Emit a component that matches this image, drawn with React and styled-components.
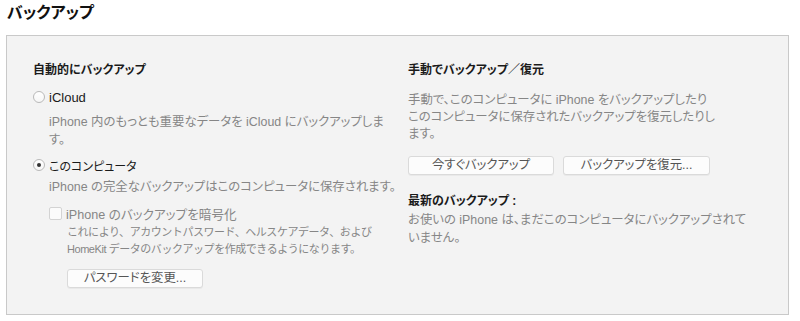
import React from 'react';
import styled, { createGlobalStyle } from 'styled-components';

const GlobalStyle = createGlobalStyle`
    body {
        margin: 0;
        background: #ffffff;
        font-family: "Liberation Sans", "Noto Sans CJK JP", sans-serif;
        font-feature-settings: "palt";
        color: #1d1d1d;
    }
`;

const Page = styled.div`
    width: 800px;
    height: 321px;
    overflow: hidden;
`;

const PageTitle = styled.h1`
    margin: 0;
    padding: 2px 0 0 7px;
    height: 22px;
    line-height: 22px;
    font-size: 16px;
    font-weight: bold;
    color: #111;
`;

const Panel = styled.div`
    margin: 11px 0 0 6px;
    width: 781px;
    height: 278px;
    background: #f3f3f3;
    border: 1px solid #c9c9c9;
    display: grid;
    grid-template-columns: 401px 1fr;
`;

const Column = styled.div`
    display: flex;
    flex-direction: column;
    align-items: flex-start;
    padding-top: 26px;
    padding-left: ${(props) => props.inset || 0}px;
`;

const Heading = styled.div`
    font-size: 12px;
    font-weight: bold;
    line-height: 16px;
    color: #1a1a1a;
    white-space: nowrap;
    margin-top: ${(props) => props.gap || 0}px;
`;

const RadioRow = styled.label`
    display: flex;
    align-items: center;
    gap: 4px;
    height: 18px;
    margin-top: ${(props) => props.gap || 0}px;
    font-size: ${(props) => props.size || 13}px;
    color: #1a1a1a;
    white-space: nowrap;
`;

const RadioCircle = styled.span`
    width: 12px;
    height: 12px;
    box-sizing: border-box;
    border-radius: 50%;
    border: 1px solid #b9b9b9;
    background: linear-gradient(#ffffff, #f6f6f6);
    display: flex;
    align-items: center;
    justify-content: center;

    &::after {
        content: '';
        display: ${(props) => (props.checked ? 'block' : 'none')};
        width: 4px;
        height: 4px;
        border-radius: 50%;
        background: #333;
    }
`;

const Desc = styled.div`
    font-size: ${(props) => props.size || 12.4}px;
    line-height: ${(props) => props.lh || 18}px;
    letter-spacing: ${(props) => props.ls || 0}px;
    font-feature-settings: ${(props) => (props.full ? 'normal' : '"palt"')};
    color: #868686;
    white-space: nowrap;
    margin-top: ${(props) => props.gap || 0}px;
    margin-left: ${(props) => props.indent || 0}px;
`;

const CheckRow = styled.label`
    display: flex;
    align-items: center;
    gap: 4px;
    height: 18px;
    margin-top: ${(props) => props.gap || 0}px;
    margin-left: ${(props) => props.indent || 0}px;
    font-size: 12.6px;
    color: #868686;
    white-space: nowrap;
`;

const CheckBox = styled.span`
    width: 13px;
    height: 13px;
    box-sizing: border-box;
    border-radius: 2px;
    border: 1px solid #d3d3d3;
    background: #fbfbfb;
`;

const ButtonRow = styled.div`
    display: flex;
    gap: 9px;
    margin-top: ${(props) => props.gap || 0}px;
    margin-left: ${(props) => props.indent || 0}px;
`;

const Button = styled.button`
    width: ${(props) => props.w}px;
    height: 19px;
    padding: 0;
    box-sizing: border-box;
    border: 1px solid #dadada;
    border-radius: 3px;
    background: #fcfcfc;
    box-shadow: 0 1px 0 rgba(0, 0, 0, 0.04);
    font-family: inherit;
    font-feature-settings: "palt";
    font-size: 12.4px;
    line-height: 17px;
    color: #555;
    text-align: center;
    white-space: nowrap;
`;

const App = () => {
    return (
        <Page>
            <GlobalStyle />
            <PageTitle>バックアップ</PageTitle>
            <Panel>
                <Column inset={26}>
                    <Heading>自動的にバックアップ</Heading>
                    <RadioRow gap={10}>
                        <RadioCircle />
                        iCloud
                    </RadioRow>
                    <Desc gap={7} indent={16}>
                        iPhone 内のもっとも重要なデータを iCloud にバックアップしま
                        <br />
                        す。
                    </Desc>
                    <RadioRow gap={7} size={12}>
                        <RadioCircle checked />
                        このコンピュータ
                    </RadioRow>
                    <Desc gap={4} indent={16}>
                        iPhone の完全なバックアップはこのコンピュータに保存されます。
                    </Desc>
                    <CheckRow gap={8} indent={16}>
                        <CheckBox />
                        iPhone のバックアップを暗号化
                    </CheckRow>
                    <Desc gap={2} indent={34} size={11} lh={17} ls={-0.45} full>
                        これにより、アカウントパスワード、ヘルスケアデータ、および
                        <br />
                        HomeKit データのバックアップを作成できるようになります。
                    </Desc>
                    <ButtonRow gap={11} indent={34}>
                        <Button w={136}>パスワードを変更...</Button>
                    </ButtonRow>
                </Column>
                <Column>
                    <Heading>手動でバックアップ／復元</Heading>
                    <Desc gap={14} lh={17}>
                        手動で、このコンピュータに iPhone をバックアップしたり
                        <br />
                        このコンピュータに保存されたバックアップを復元したりし
                        <br />
                        ます。
                    </Desc>
                    <ButtonRow gap={13}>
                        <Button w={146}>今すぐバックアップ</Button>
                        <Button w={147}>バックアップを復元...</Button>
                    </ButtonRow>
                    <Heading gap={18}>最新のバックアップ :</Heading>
                    <Desc gap={2}>
                        お使いの iPhone は、まだこのコンピュータにバックアップされて
                        <br />
                        いません。
                    </Desc>
                </Column>
            </Panel>
        </Page>
    );
};

export default App;
